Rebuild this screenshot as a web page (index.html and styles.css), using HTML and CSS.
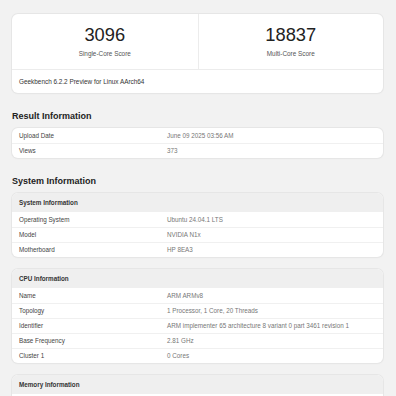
FILE: index.html
```html
<!DOCTYPE html>
<html>
<head>
    <meta name="viewport" content="width=device-width, initial-scale=1.0">
    <link rel="stylesheet" href="styles.css">
</head>
<body>
    <div class="card scoreCard">
        <div class="scores">
            <div class="score">
                <div class="scoreValue">3096</div>
                <div class="scoreLabel">Single-Core Score</div>
            </div>
            <div class="score">
                <div class="scoreValue">18837</div>
                <div class="scoreLabel">Multi-Core Score</div>
            </div>
        </div>
        <div class="scoreFooter">Geekbench 6.2.2 Preview for Linux AArch64</div>
    </div>

    <h2 class="sectionTitle">Result Information</h2>
    <div class="card">
        <div class="row"><span class="name">Upload Date</span><span class="value">June 09 2025 03:56 AM</span></div>
        <div class="row"><span class="name">Views</span><span class="value">373</span></div>
    </div>

    <h2 class="sectionTitle">System Information</h2>
    <div class="card">
        <div class="cardHeader">System Information</div>
        <div class="row"><span class="name">Operating System</span><span class="value">Ubuntu 24.04.1 LTS</span></div>
        <div class="row"><span class="name">Model</span><span class="value">NVIDIA N1x</span></div>
        <div class="row"><span class="name">Motherboard</span><span class="value">HP 8EA3</span></div>
    </div>

    <div class="card">
        <div class="cardHeader">CPU Information</div>
        <div class="row"><span class="name">Name</span><span class="value">ARM ARMv8</span></div>
        <div class="row"><span class="name">Topology</span><span class="value">1 Processor, 1 Core, 20 Threads</span></div>
        <div class="row"><span class="name">Identifier</span><span class="value">ARM implementer 65 architecture 8 variant 0 part 3461 revision 1</span></div>
        <div class="row"><span class="name">Base Frequency</span><span class="value">2.81 GHz</span></div>
        <div class="row"><span class="name">Cluster 1</span><span class="value">0 Cores</span></div>
    </div>

    <div class="card openCard">
        <div class="cardHeader">Memory Information</div>
    </div>
</body>
</html>
```

FILE: styles.css
```css
body {
    margin: 0;
    padding: 14px 13px 0 12px;
    background: #f2f2f2;
    font-family: "Liberation Sans", Arial, sans-serif;
    color: #333;
    font-size: 6.3px;
    height: 396px;
    overflow: hidden;
    box-sizing: border-box;
}

.card {
    background: #fff;
    border-radius: 6px;
    box-shadow: 0 0 0 1px #e6e6e6, 0 1px 2px rgba(0,0,0,0.04);
    overflow: hidden;
    margin-bottom: 12px;
}

.scores {
    display: grid;
    grid-template-columns: 1fr 1fr;
    border-bottom: 1px solid #ececec;
}

.score {
    height: 55px;
    display: flex;
    flex-direction: column;
    align-items: center;
    padding-top: 11px;
    box-sizing: border-box;
}

.score + .score {
    border-left: 1px solid #ececec;
}

.scoreValue {
    font-size: 18.3px;
    line-height: 20px;
    color: #222;
}

.scoreLabel {
    margin-top: 5px;
    color: #555;
    font-size: 6.4px;
}

.scoreFooter {
    height: 23px;
    line-height: 23px;
    padding-left: 7px;
    color: #333;
    font-size: 6.4px;
}

.scoreCard {
    margin-bottom: 0;
}

.sectionTitle {
    font-size: 9px;
    line-height: 12px;
    font-weight: bold;
    color: #222;
    margin: 17px 0 6px 0;
}

.cardHeader {
    height: 19px;
    line-height: 19px;
    padding-left: 7px;
    background: #efefef;
    font-weight: bold;
    color: #333;
}

.row {
    display: grid;
    grid-template-columns: 148px 1fr;
    height: 15px;
    line-height: 14px;
    padding-left: 7px;
    border-top: 1px solid #f0f0f0;
    box-sizing: border-box;
}

.card > .row:first-child,
.cardHeader + .row {
    border-top: none;
    line-height: 15px;
}

.name {
    color: #444;
}

.value {
    color: #777;
    white-space: nowrap;
}

.openCard {
    height: 40px;
    border-bottom-left-radius: 0;
    border-bottom-right-radius: 0;
}
```
